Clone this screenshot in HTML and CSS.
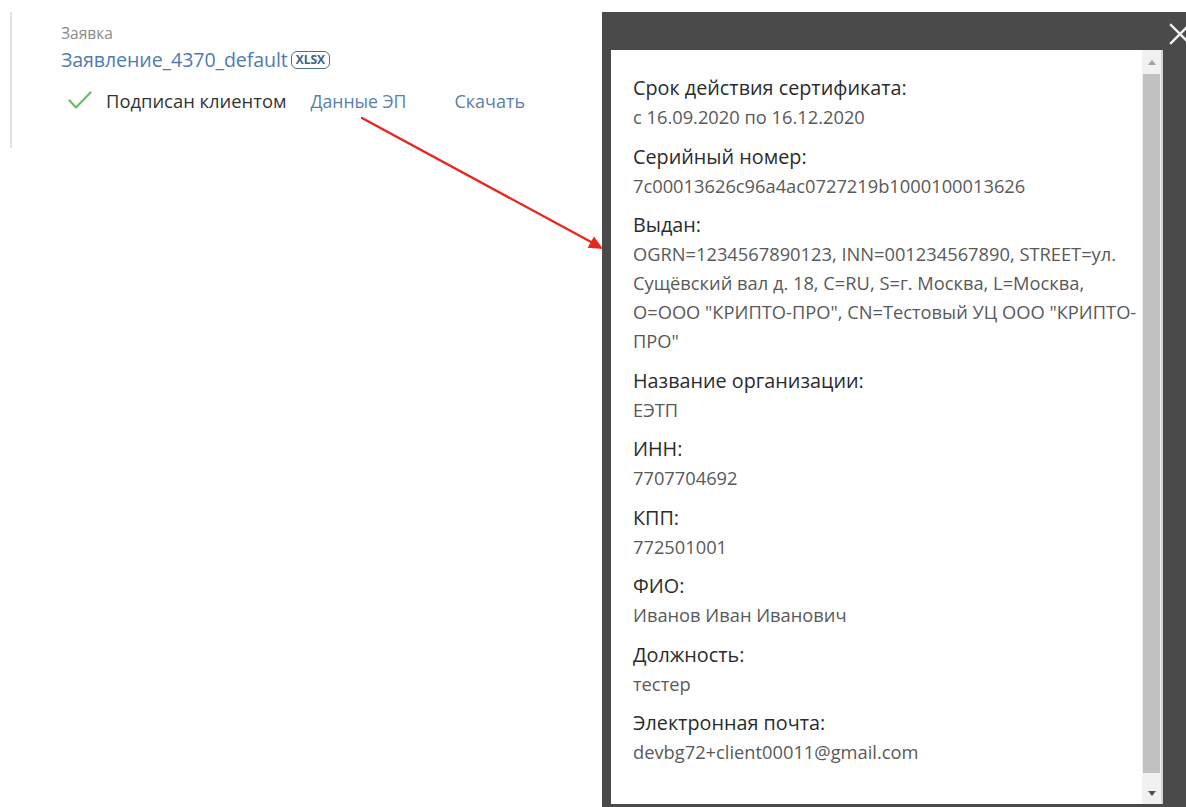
FILE: index.html
```html
<!DOCTYPE html>
<html lang="ru">
<head>
<meta charset="utf-8">
<title>Данные ЭП</title>
<link rel="stylesheet" href="styles.css">
</head>
<body>
<div class="page">
  <section class="doc">
    <div class="doc-caption">Заявка</div>
    <div class="doc-file">
      <a class="link link-file" href="#">Заявление_4370_default</a><span class="badge">XLSX</span>
    </div>
    <div class="doc-status">
      <svg class="check" width="24" height="20" viewBox="0 0 24 20" aria-hidden="true">
        <polyline points="1.5,9.5 8,16.5 22.5,1.5" fill="none" stroke="#6cbd6a" stroke-width="2.2" stroke-linecap="round" stroke-linejoin="round"/>
      </svg>
      <span class="status-text">Подписан клиентом</span>
      <a class="link link-sign" href="#">Данные ЭП</a>
      <a class="link link-download" href="#">Скачать</a>
    </div>
  </section>
</div>

<div class="overlay">
  <button class="close" type="button" aria-label="Закрыть">
    <svg width="22" height="22" viewBox="0 0 22 22">
      <path d="M2 2 L20 20 M20 2 L2 20" stroke="#f2f2f2" stroke-width="2.4" stroke-linecap="square"/>
    </svg>
  </button>
  <div class="cert">
    <dl class="cert-body">
      <div class="field">
        <dt>Срок действия сертификата:</dt>
        <dd>с 16.09.2020 по 16.12.2020</dd>
      </div>
      <div class="field">
        <dt>Серийный номер:</dt>
        <dd>7c00013626c96a4ac0727219b1000100013626</dd>
      </div>
      <div class="field">
        <dt>Выдан:</dt>
        <dd>OGRN=1234567890123, INN=001234567890, STREET=ул.<br>Сущёвский вал д. 18, C=RU, S=г. Москва, L=Москва,<br>O=ООО "КРИПТО-ПРО", CN=Тестовый УЦ ООО "КРИПТО-<br>ПРО"</dd>
      </div>
      <div class="field">
        <dt>Название организации:</dt>
        <dd>ЕЭТП</dd>
      </div>
      <div class="field">
        <dt>ИНН:</dt>
        <dd>7707704692</dd>
      </div>
      <div class="field">
        <dt>КПП:</dt>
        <dd>772501001</dd>
      </div>
      <div class="field">
        <dt>ФИО:</dt>
        <dd>Иванов Иван Иванович</dd>
      </div>
      <div class="field">
        <dt>Должность:</dt>
        <dd>тестер</dd>
      </div>
      <div class="field">
        <dt>Электронная почта:</dt>
        <dd>devbg72+client00011@gmail.com</dd>
      </div>
    </dl>
    <div class="scrollbar" aria-hidden="true">
      <span class="scroll-btn up"></span>
      <span class="scroll-thumb"></span>
      <span class="scroll-btn down"></span>
    </div>
  </div>
</div>

<svg class="pointer" width="1186" height="807" viewBox="0 0 1186 807" aria-hidden="true">
  <line x1="362" y1="118" x2="593" y2="243" stroke="#e8261e" stroke-width="2.4" stroke-linecap="round"/>
  <polygon points="603,249 587.6,247.8 594,236.6" fill="#e8261e"/>
</svg>
</body>
</html>
```

FILE: styles.css
```css
* {
  box-sizing: border-box;
}

html,
body {
  margin: 0;
  padding: 0;
  height: 100%;
  background: #ffffff;
  overflow: hidden;
}

body {
  font-family: "Open Sans", "Noto Sans", sans-serif;
  color: #333333;
  position: relative;
}

/* ---------- document block ---------- */

.page {
  padding: 12px 0 0 10px;
}

.doc {
  border-left: 2px solid #e2e2e2;
  height: 136px;
  padding: 11px 0 0 49px;
}

.doc-caption {
  font-size: 15.5px;
  line-height: 20px;
  color: #8a8a8a;
}

.doc-file {
  margin-top: 5px;
  display: flex;
  align-items: center;
  height: 24px;
}

.link {
  color: #4f7cae;
  text-decoration: none;
  font-size: 18px;
  line-height: 24px;
}

.link-file {
  font-size: 19.6px;
  letter-spacing: -0.1px;
}

.badge {
  margin-left: 3px;
  border: 1.5px solid #4f6f92;
  border-radius: 6px;
  font-size: 12px;
  font-weight: 700;
  line-height: 16px;
  padding: 0 4px;
  color: #3f5f82;
}

.doc-status {
  margin-top: 17px;
  display: flex;
  align-items: center;
  height: 24px;
  padding-left: 7px;
}

.check {
  flex: none;
  margin-right: 14px;
}

.status-text {
  font-size: 18.4px;
  line-height: 24px;
  color: #333333;
}

.link-sign {
  margin-left: 24px;
  font-size: 17.6px;
  color: #5a7fa8;
}

.link-download {
  margin-left: 48px;
  color: #5a7fa8;
}

/* ---------- certificate overlay ---------- */

.overlay {
  position: absolute;
  left: 602px;
  top: 12px;
  right: 0;
  bottom: 0;
  background: #4a4a4a;
  padding: 38px 0 3px 9px;
}

.close {
  position: absolute;
  top: 11px;
  right: -5px;
  width: 22px;
  height: 22px;
  padding: 0;
  border: 0;
  background: none;
}

.close svg {
  display: block;
}

.cert {
  width: 550px;
  height: 100%;
  background: #ffffff;
  display: flex;
}

.cert-body {
  flex: 1;
  margin: 0;
  padding: 24px 6px 0 22px;
  white-space: nowrap;
}

.field {
  margin-bottom: 11.5px;
}

.field dt {
  font-size: 19.8px;
  line-height: 28px;
  color: #2b2b2b;
}

.field dd {
  margin: 0;
  font-size: 18.3px;
  line-height: 29px;
  color: #595959;
}

/* ---------- scrollbar ---------- */

.scrollbar {
  flex: none;
  width: 21px;
  display: flex;
  flex-direction: column;
  align-items: center;
  background: #f1f1f1;
  border-right: 2px solid #d6d6d6;
  padding: 6px 0 6px;
}

.scroll-btn {
  width: 0;
  height: 0;
  border-left: 4px solid transparent;
  border-right: 4px solid transparent;
  flex: none;
}

.scroll-btn.up {
  border-bottom: 5px solid #a3a3a3;
  margin-top: 4px;
}

.scroll-btn.down {
  border-top: 5px solid #505050;
  margin-bottom: 2px;
}

.scroll-thumb {
  flex: 1;
  width: 17px;
  background: #c1c1c1;
  margin: 9px 0 18px;
}

/* ---------- annotation arrow ---------- */

.pointer {
  position: absolute;
  left: 0;
  top: 0;
  pointer-events: none;
}
```
